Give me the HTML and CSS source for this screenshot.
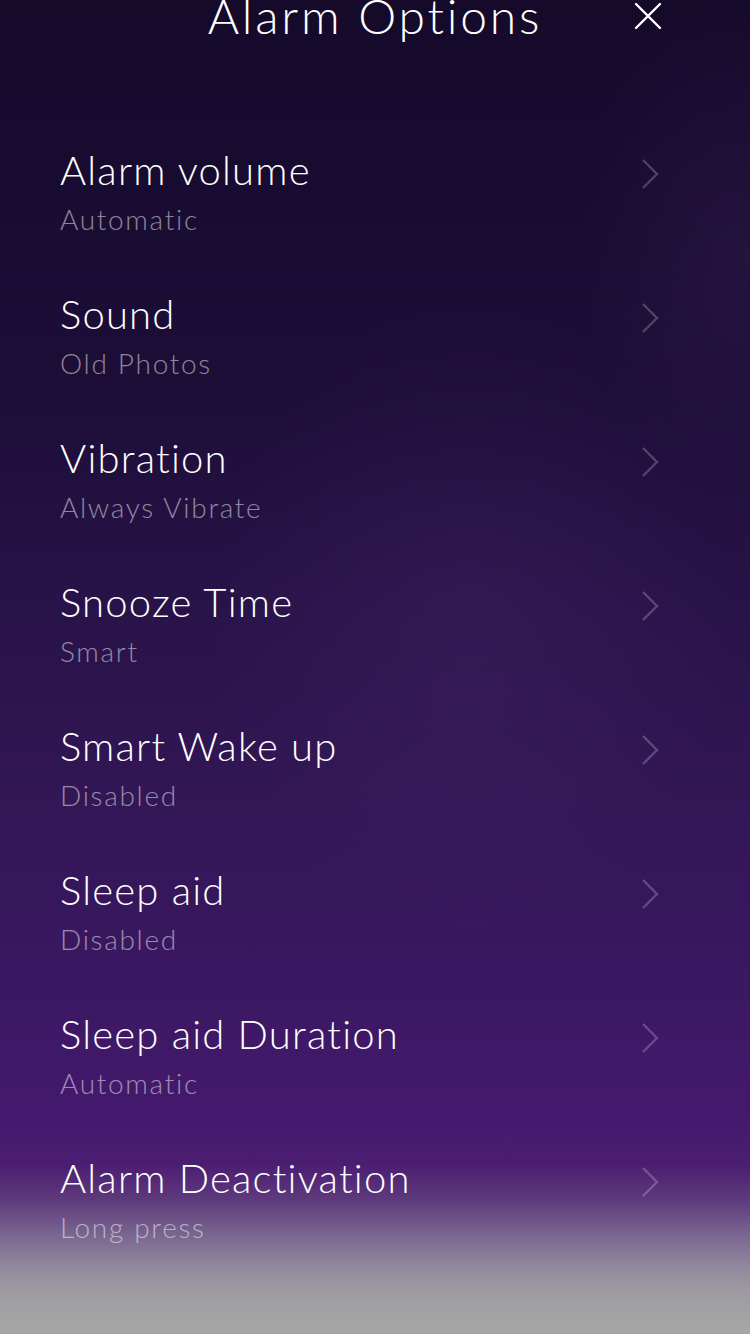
FILE: index.html
```html
<!DOCTYPE html>
<html lang="en">
<head>
<meta charset="utf-8">
<title>Alarm Options</title>
<link rel="stylesheet" href="styles.css">
</head>
<body>
<div class="screen">
  <header class="header">
    <span class="spacer"></span>
    <h1 class="title">Alarm Options</h1>
    <button class="close" aria-label="Close">
      <svg width="28" height="28" viewBox="0 0 28 28"><path d="M2 2 L26 26 M26 2 L2 26" stroke="#fff" stroke-width="2.4" fill="none" stroke-linecap="round"/></svg>
    </button>
  </header>
  <ul class="list">
    <li class="row"><div class="text"><div class="name">Alarm volume</div><div class="value">Automatic</div></div><svg class="chev" width="20" height="32" viewBox="0 0 20 32"><path d="M3 2 L17 16 L3 30" /></svg></li>
    <li class="row"><div class="text"><div class="name">Sound</div><div class="value">Old Photos</div></div><svg class="chev" width="20" height="32" viewBox="0 0 20 32"><path d="M3 2 L17 16 L3 30" /></svg></li>
    <li class="row"><div class="text"><div class="name">Vibration</div><div class="value">Always Vibrate</div></div><svg class="chev" width="20" height="32" viewBox="0 0 20 32"><path d="M3 2 L17 16 L3 30" /></svg></li>
    <li class="row"><div class="text"><div class="name">Snooze Time</div><div class="value">Smart</div></div><svg class="chev" width="20" height="32" viewBox="0 0 20 32"><path d="M3 2 L17 16 L3 30" /></svg></li>
    <li class="row"><div class="text"><div class="name">Smart Wake up</div><div class="value">Disabled</div></div><svg class="chev" width="20" height="32" viewBox="0 0 20 32"><path d="M3 2 L17 16 L3 30" /></svg></li>
    <li class="row"><div class="text"><div class="name">Sleep aid</div><div class="value">Disabled</div></div><svg class="chev" width="20" height="32" viewBox="0 0 20 32"><path d="M3 2 L17 16 L3 30" /></svg></li>
    <li class="row"><div class="text"><div class="name">Sleep aid Duration</div><div class="value">Automatic</div></div><svg class="chev" width="20" height="32" viewBox="0 0 20 32"><path d="M3 2 L17 16 L3 30" /></svg></li>
    <li class="row"><div class="text"><div class="name">Alarm Deactivation</div><div class="value">Long press</div></div><svg class="chev" width="20" height="32" viewBox="0 0 20 32"><path d="M3 2 L17 16 L3 30" /></svg></li>
  </ul>
</div>
</body>
</html>
```
FILE: styles.css
```css
* { box-sizing: border-box; }
html, body { margin: 0; padding: 0; }
body {
  width: 750px;
  height: 1334px;
  overflow: hidden;
  font-family: Lato, "Open Sans", sans-serif;
  color: #fff;
}
.screen {
  width: 750px;
  height: 1334px;
  overflow: hidden;
  background:
    radial-gradient(ellipse 260px 320px at 470px 620px, rgba(120, 70, 160, 0.12), rgba(120, 70, 160, 0) 100%),
    radial-gradient(ellipse 160px 260px at 740px 250px, rgba(120, 80, 150, 0.10), rgba(120, 80, 150, 0) 100%),
    linear-gradient(180deg,
      #160a2b 0px,
      #180b30 150px,
      #1d0e38 400px,
      #281348 600px,
      #321655 800px,
      #3c1863 1000px,
      #45196e 1120px,
      #4c1e72 1165px,
      #5e3a7c 1200px,
      #7a6690 1235px,
      #8f869c 1265px,
      #9d9aa2 1290px,
      #a3a3a4 1315px,
      #a5a5a5 1334px);
}
.header {
  height: 32px;
  display: grid;
  grid-template-columns: 1fr auto 1fr;
  align-items: center;
}
.title {
  margin: 0;
  font-size: 48px;
  font-weight: 300;
  letter-spacing: 2.8px;
  line-height: 30px;
  white-space: nowrap;
}
.close {
  justify-self: end;
  margin-right: 88px;
  padding: 0;
  border: 0;
  background: none;
  width: 28px;
  height: 28px;
  display: flex;
}
.list {
  list-style: none;
  margin: 0;
  padding: 88px 90px 0 60px;
}
.row {
  display: flex;
  align-items: flex-start;
  justify-content: space-between;
  padding: 26px 0;
}
.name {
  font-size: 40px;
  font-weight: 300;
  letter-spacing: 1.2px;
  line-height: 48px;
  white-space: nowrap;
}
.value {
  margin-top: 5px;
  margin-bottom: -1px;
  font-size: 28px;
  font-weight: 300;
  letter-spacing: 1.7px;
  line-height: 40px;
  color: rgba(255, 255, 255, 0.5);
  white-space: nowrap;
}
.chev {
  margin-top: 12px;
  fill: none;
  stroke: rgba(255, 255, 255, 0.22);
  stroke-width: 2.4;
}
```
